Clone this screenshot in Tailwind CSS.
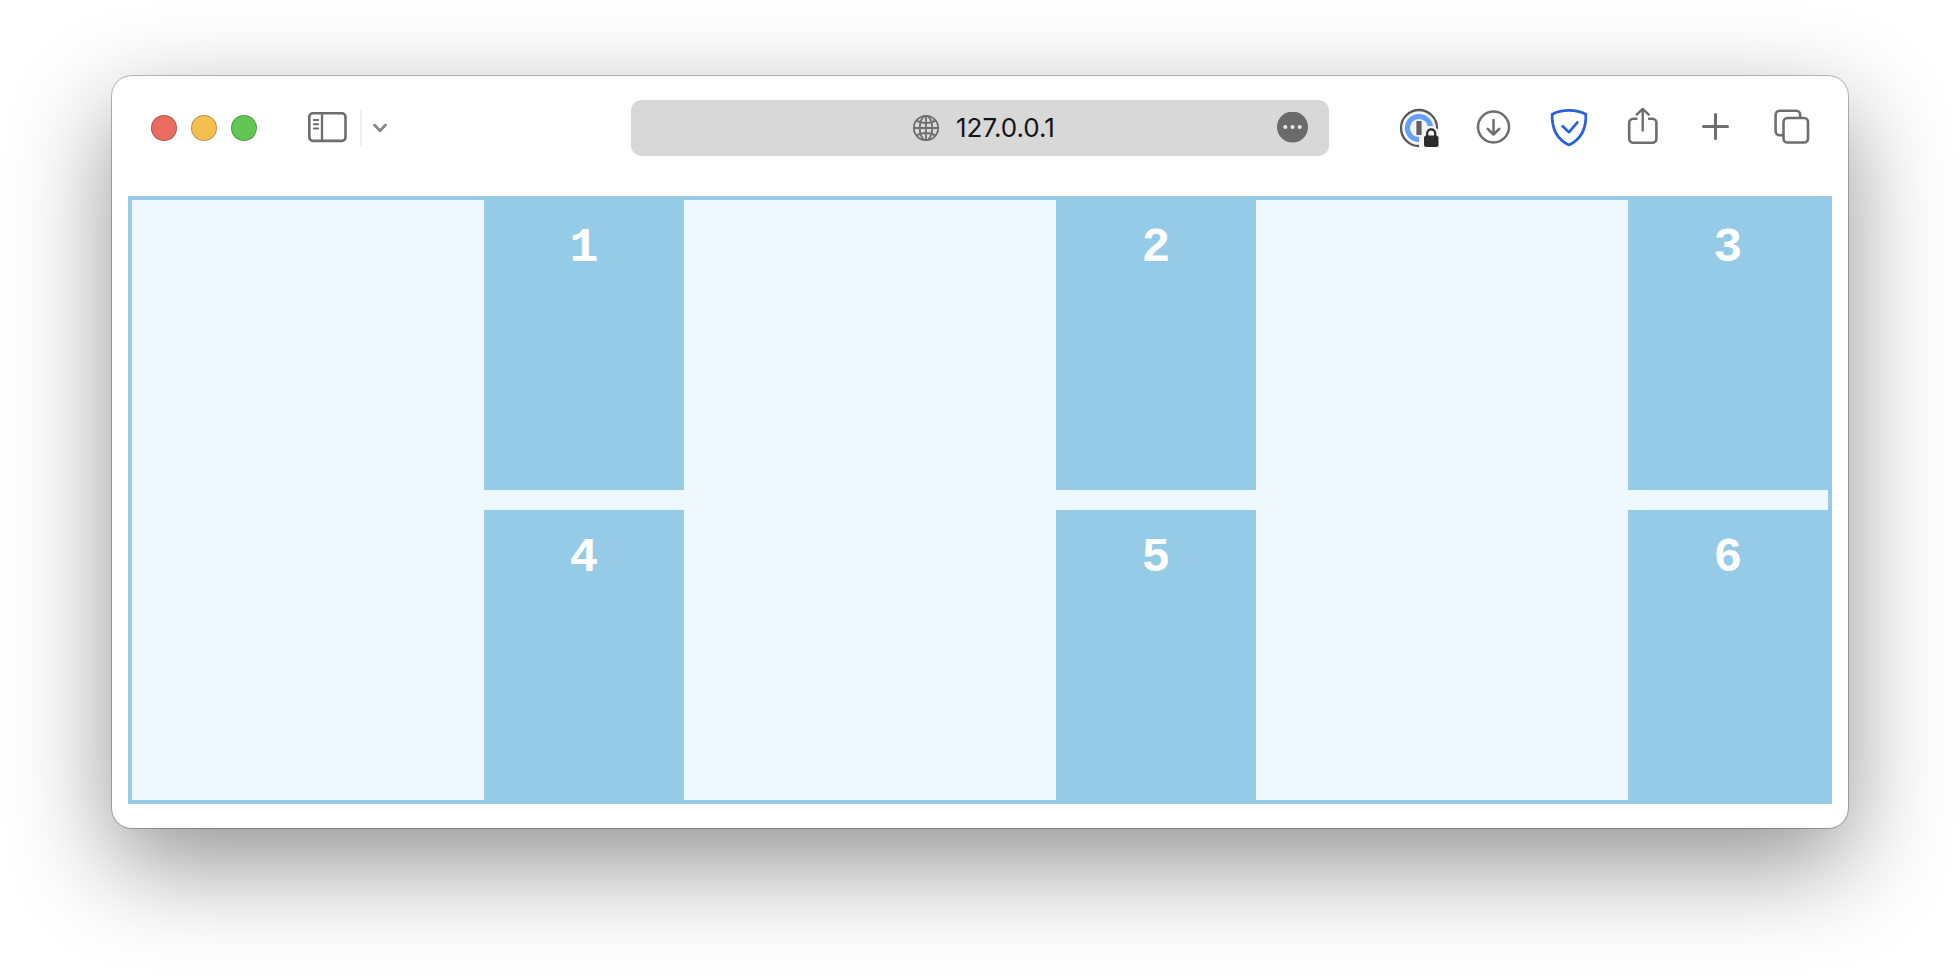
<!DOCTYPE html>
<html lang="en">
<head>
<meta charset="utf-8">
<meta name="viewport" content="width=device-width, initial-scale=1">
<title>127.0.0.1</title>
<script src="https://cdn.jsdelivr.net/npm/@tailwindcss/browser@4"></script>
</head>
<body class="bg-white px-28 pt-[76px] pb-36">
<div class="rounded-[20px] bg-white shadow-[0_0_0_1px_rgba(0,0,0,0.25),0_36px_100px_rgba(0,0,0,0.43)]">
  <header class="grid h-[104px] grid-cols-[1fr_minmax(0,698px)_1fr] items-center">
    <div class="flex items-center pl-10">
      <div class="flex gap-4">
        <button aria-label="Close" class="size-6 rounded-full bg-[#ec6b60] ring-1 ring-[#b0524a]"></button>
        <button aria-label="Minimize" class="size-6 rounded-full bg-[#f5bf50] ring-1 ring-[#b8924a]"></button>
        <button aria-label="Zoom" class="size-6 rounded-full bg-[#62c655] ring-1 ring-[#4d9446]"></button>
      </div>
      <button aria-label="Show sidebar" class="ml-[52px]">
        <svg class="h-8 w-10" viewBox="0 0 40 32" fill="none" stroke="#6e6e6e" stroke-width="2.6" stroke-linecap="round"><rect x="1.3" y="1.3" width="36.2" height="27.6" rx="3.6"/><path d="M14 1.5V29" stroke-linecap="butt" stroke-width="2.3"/><path d="M5.8 8h4.4M5.8 12.2h4.4M5.8 16.5h4.4" stroke-width="1.9"/></svg>
      </button>
      <div class="ml-3 h-9 w-0.5 bg-[#f0f0f0]"></div>
      <button aria-label="Tab groups" class="ml-2.5">
        <svg class="size-4" viewBox="0 0 16 16" fill="none" stroke="#88888c" stroke-width="2.8" stroke-linecap="round" stroke-linejoin="round"><path d="M2.5 5 8 10.8 13.5 5"/></svg>
      </button>
    </div>

    <div class="flex h-14 items-center rounded-[10px] bg-[#d8d8d8] pr-5 pl-[72px]">
      <div class="flex flex-1 items-center justify-center gap-4">
        <svg class="size-7" viewBox="0 0 28 28" fill="none" stroke="#6e6e6e" stroke-width="1.8" aria-hidden="true"><circle cx="14" cy="14" r="12.2"/><ellipse cx="14" cy="14" rx="6.3" ry="12.2"/><path d="M14 1.8v24.4M1.8 14h24.400M4.600 6.400c5 3.500 13.800 3.500 18.800 0M4.600 21.600c5-3.500 13.800-3.500 18.800 0"/></svg>
        <input type="text" aria-label="Address" value="127.0.0.1" class="h-10 w-28 bg-transparent font-['Inter',sans-serif] text-[26px] leading-10 text-[#141414] outline-none">
      </div>
      <button aria-label="Page menu">
        <svg class="size-8" viewBox="0 0 32 32"><circle cx="15.5" cy="15" r="15.5" fill="#6a6a6a"/><g fill="#e6e6e6"><circle cx="8.3" cy="15" r="2.1"/><circle cx="15.5" cy="15" r="2.1"/><circle cx="22.7" cy="15" r="2.1"/></g></svg>
      </button>
    </div>

    <nav aria-label="Toolbar" class="flex items-center justify-end gap-9 pr-[37px]">
      <button aria-label="Password manager, locked">
        <svg class="h-10 w-10" viewBox="0 0 40 40"><circle cx="20" cy="20" r="18" fill="#f4f4f4" stroke="#58585a" stroke-width="2.3"/><circle cx="20" cy="20" r="11.6" fill="#f4f4f4" stroke="#60a2fa" stroke-width="5"/><path d="M20 39.3V27l2.5-1.5 4-7.5h8l5 4v17.3z" fill="#f3f3f3"/><path d="M17.4 13h5.2v14h-5.2z" fill="#606060"/><rect x="25" y="27.5" width="14.5" height="11.5" rx="2.5" fill="#2b2b2b"/><path d="M28.2 28.5v-3.2a4 4 0 0 1 8 0v3.2" fill="none" stroke="#2b2b2b" stroke-width="2.2"/></svg>
      </button>
      <button aria-label="Downloads">
        <svg class="h-10 w-9" viewBox="0 0 36 40" fill="none" stroke="#6e6e6e" stroke-width="2.5" stroke-linecap="round" stroke-linejoin="round"><circle cx="18.5" cy="19" r="15.5"/><path d="M18.5 12v14.3M12.7 20.8l5.8 5.7 5.8-5.7"/></svg>
      </button>
      <button aria-label="Content blocker">
        <svg class="h-10 w-11" viewBox="0 0 44 40" fill="none" stroke="#2760de" stroke-width="2.7" stroke-linecap="round" stroke-linejoin="round"><path d="M22 2.3c-6.3 0-12 1.3-16.8 3.9C4.7 19 8.5 30.5 22 37 35.5 30.5 39.3 19 38.8 6.2 34 3.6 28.3 2.3 22 2.3Z"/><path d="m15.7 18.3 6.3 5.9 8.4-9.8"/></svg>
      </button>
      <button aria-label="Share">
        <svg class="h-10 w-8" viewBox="0 0 32 40" fill="none" stroke="#6e6e6e" stroke-width="2.6" stroke-linecap="round" stroke-linejoin="round"><path d="M10.5 10.7H6.2a4 4 0 0 0-4 4v16a4 4 0 0 0 4 4h19.2a4 4 0 0 0 4-4v-16a4 4 0 0 0-4-4h-4.3" stroke-linecap="butt"/><path d="M15.7 22.5V1.2M9.7 6.6 15.7.9l6 5.7" stroke-width="2.4"/></svg>
      </button>
      <button aria-label="New tab">
        <svg class="h-10 w-10" viewBox="0 0 40 40" fill="none" stroke="#6e6e6e" stroke-width="3" stroke-linecap="round"><path d="M20.5 6.5v24M8.5 18.5h24"/></svg>
      </button>
      <button aria-label="Tab overview">
        <svg class="h-10 w-10" viewBox="0 0 40 40" fill="none" stroke="#6e6e6e" stroke-width="2.6"><path d="M12 27.2H8.600a4 4 0 0 1-4-4V6.700a4 4 0 0 1 4-4h16.600a4 4 0 0 1 4 4v3.300"/><rect x="12.500" y="10" width="24.500" height="24.500" rx="4"/></svg>
      </button>
    </nav>
  </header>

  <main class="px-4 pt-4 pb-6">
    <div class="grid auto-rows-[290px] grid-cols-3 justify-items-end gap-5 border-4 border-[#96cbe7] bg-[#f0f8ff] text-center font-['Liberation_Mono',monospace] text-5xl leading-[56px] font-bold text-white">
      <div class="w-[200px] bg-[#96cbe7] pt-5">1</div>
      <div class="w-[200px] bg-[#96cbe7] pt-5">2</div>
      <div class="w-[200px] bg-[#96cbe7] pt-5">3</div>
      <div class="w-[200px] bg-[#96cbe7] pt-5">4</div>
      <div class="w-[200px] bg-[#96cbe7] pt-5">5</div>
      <div class="w-[200px] bg-[#96cbe7] pt-5">6</div>
    </div>
  </main>
</div>
</body>
</html>
